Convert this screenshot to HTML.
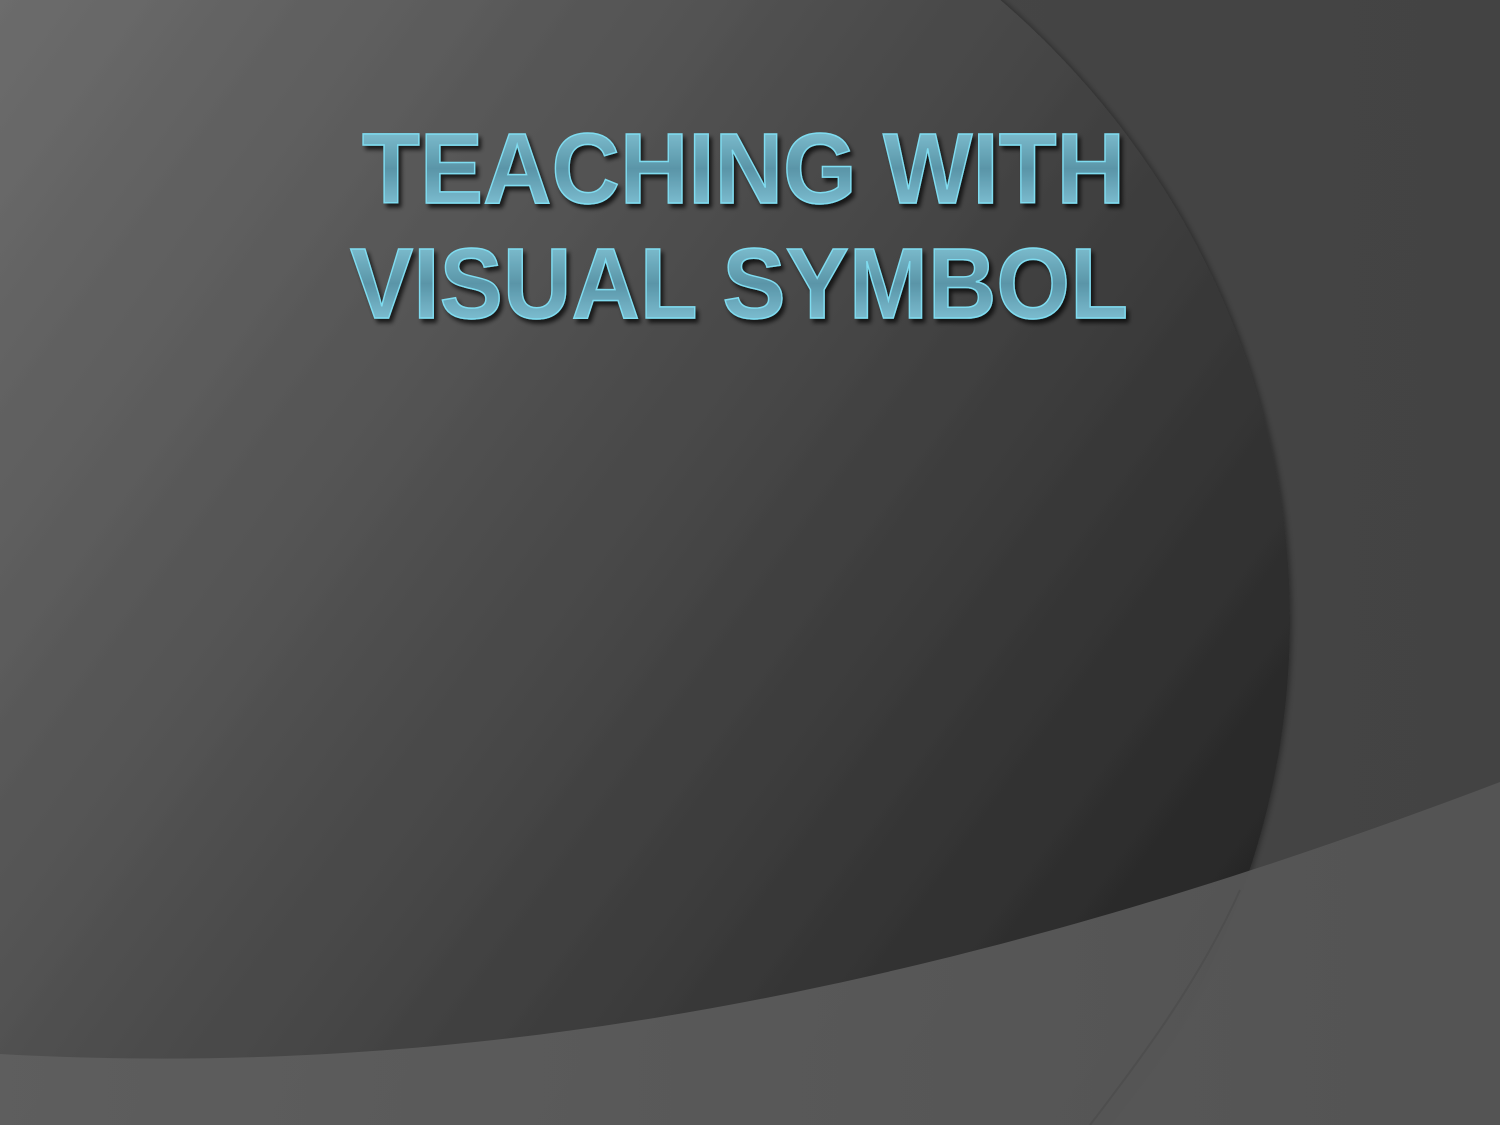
<!DOCTYPE html>
<html><head><meta charset="utf-8"><style>html,body{margin:0;padding:0;background:#454545;width:1500px;height:1125px;overflow:hidden;position:relative}svg{display:block;position:absolute;left:0;top:0}</style></head><body>
<svg width="1500" height="1125" viewBox="0 0 1500 1125" xmlns="http://www.w3.org/2000/svg">
<defs>
<linearGradient id="bg" x1="0" y1="0" x2="1" y2="0">
<stop offset="0" stop-color="#484848"/><stop offset="1" stop-color="#434343"/></linearGradient>
<linearGradient id="el" gradientUnits="userSpaceOnUse" x1="0" y1="0" x2="1250" y2="900">
<stop offset="0" stop-color="#6c6c6c"/><stop offset="0.5" stop-color="#4a4a4a"/><stop offset="1" stop-color="#272727"/></linearGradient>
<linearGradient id="band" gradientUnits="userSpaceOnUse" x1="0" y1="0" x2="1500" y2="0">
<stop offset="0" stop-color="#5e5e5e"/><stop offset="1" stop-color="#545454"/></linearGradient>
<linearGradient id="tx" x1="0" y1="0" x2="0" y2="1">
<stop offset="0" stop-color="#8ccfe0"/><stop offset="0.5" stop-color="#5a95a8"/><stop offset="1" stop-color="#8fd3e6"/></linearGradient>
<filter id="sh" x="-5%" y="-5%" width="110%" height="120%"><feDropShadow dx="3" dy="4" stdDeviation="2" flood-color="#000" flood-opacity="0.7"/></filter>
<filter id="es"><feDropShadow dx="2" dy="0" stdDeviation="3" flood-color="#000" flood-opacity="0.35"/></filter>
</defs>
<rect width="1500" height="1125" fill="url(#bg)"/>
<ellipse cx="400" cy="620" rx="890" ry="840" fill="url(#el)" filter="url(#es)"/>
<path d="M0 1054 C 380 1075, 850 1030, 1500 782 L1500 1125 L0 1125 Z" fill="url(#band)" opacity="0.97"/>
<path d="M1240 890 C 1200 980, 1140 1060, 1090 1125" stroke="#4a4a4a" stroke-width="2" fill="none" opacity="0.6"/>
<g font-family="Liberation Sans, Arial, sans-serif" font-weight="bold" font-size="100" fill="url(#tx)" stroke="#7fdcf0" stroke-width="1.5" filter="url(#sh)">
<text x="362" y="203" textLength="763" lengthAdjust="spacingAndGlyphs">TEACHING WITH</text>
<text x="350" y="318" textLength="778" lengthAdjust="spacingAndGlyphs">VISUAL SYMBOL</text>
</g>
</svg>
</body></html>
